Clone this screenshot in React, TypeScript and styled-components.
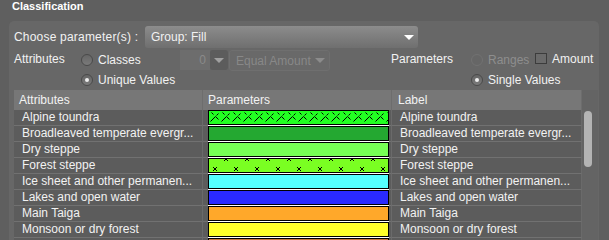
import styled, { createGlobalStyle } from "styled-components";

const GlobalStyle = createGlobalStyle`
  html, body {
    margin: 0;
    padding: 0;
    background: #5f5f5f;
  }
  body {
    font-family: "Liberation Sans", Arial, sans-serif;
    font-size: 12px;
    color: #f2f2f2;
  }
`;

type Pattern = "alpine" | "cross";

interface RowData {
  name: string;
  color: string;
  pattern?: Pattern;
}

// the last row only peeks in at the bottom edge, its text is below the fold
const rows: RowData[] = [
  { name: "Alpine toundra", color: "#22ff22", pattern: "alpine" },
  { name: "Broadleaved temperate evergr...", color: "#24a831" },
  { name: "Dry steppe", color: "#77ff55" },
  { name: "Forest steppe", color: "#7aff22", pattern: "cross" },
  { name: "Ice sheet and other permanen...", color: "#55ffff" },
  { name: "Lakes and open water", color: "#2a2aff" },
  { name: "Main Taiga", color: "#ffa82a" },
  { name: "Monsoon or dry forest", color: "#ffff2a" },
  { name: "", color: "#c8783c" },
];

const Window = styled.div`
  width: 609px;
  height: 240px;
  overflow: hidden;
  background: #5f5f5f;
`;

const Title = styled.div`
  height: 21px;
  padding-left: 12px;
  font-size: 11px;
  font-weight: bold;
  line-height: 13px;
  color: #ffffff;
`;

const Panel = styled.div`
  margin-left: 9px;
  width: 590px;
  height: 219px;
  box-sizing: border-box;
  padding: 5px 1px 0 5px;
  background: #676767;
  border-radius: 5px 5px 0 0;
  display: flex;
  flex-direction: column;
`;

const ChooseRow = styled.div`
  display: flex;
  align-items: center;
  height: 22px;
`;

const ChooseLabel = styled.span`
  width: 131px;
  letter-spacing: 0.2px;
`;

const Combo = styled.div`
  width: 273px;
  height: 22px;
  box-sizing: border-box;
  padding: 0 4px 0 6px;
  border-radius: 3px;
  background: linear-gradient(#8c8c8c, #6f6f6f);
  display: flex;
  align-items: center;
  justify-content: space-between;
`;

const Arrow = styled.span<{ $color: string }>`
  width: 0;
  height: 0;
  border-left: 5px solid transparent;
  border-right: 5px solid transparent;
  border-top: 5px solid ${(p) => p.$color};
`;

const OptionGrid = styled.div`
  margin-top: 2px;
  display: grid;
  grid-template-columns: 67px 99px 150px 61px 80px 64px auto;
  grid-template-rows: 20px 20px;
`;

const Cell = styled.div<{ $col: string }>`
  grid-column: ${(p) => p.$col};
  display: flex;
  align-items: center;
`;

const GroupLabel = styled.div<{ $col: string }>`
  grid-column: ${(p) => p.$col};
  line-height: 18px;
`;

const RadioLabel = styled.label<{ $disabled?: boolean }>`
  display: flex;
  align-items: center;
  gap: 5px;
  color: ${(p) => (p.$disabled ? "#8e8e8e" : "#f2f2f2")};
`;

const RadioDot = styled.span<{ $checked?: boolean; $disabled?: boolean }>`
  width: 12px;
  height: 12px;
  box-sizing: border-box;
  border-radius: 50%;
  border: 1px solid ${(p) => (p.$disabled ? "#727272" : "#4a4a4a")};
  background: ${(p) =>
    p.$disabled ? "#666666" : "linear-gradient(#666666, #7a7a7a)"};
  display: flex;
  align-items: center;
  justify-content: center;

  &::after {
    content: "";
    width: 4px;
    height: 4px;
    border-radius: 50%;
    background: #eeeeee;
    display: ${(p) => (p.$checked ? "block" : "none")};
  }
`;

const CheckLabel = styled.label`
  display: flex;
  align-items: flex-start;
  gap: 5px;
  align-self: flex-start;
  line-height: 18px;
`;

const CheckBox = styled.span`
  margin-top: 3px;
  width: 12px;
  height: 11px;
  box-sizing: border-box;
  border: 1px solid #3c3c3c;
  background: #6a6a6a;
`;

const Spinner = styled.div`
  display: flex;
  height: 20px;
  align-self: flex-start;
`;

const SpinBox = styled.div`
  width: 30px;
  box-sizing: border-box;
  padding-right: 4px;
  background: #6d6d6d;
  color: #8a8a8a;
  text-align: right;
  line-height: 20px;
`;

const SpinButton = styled.div`
  width: 18px;
  background: #5c5c5c;
  border-radius: 3px;
  display: flex;
  align-items: center;
  justify-content: center;
`;

const MethodCombo = styled.div`
  margin-left: 1px;
  width: 101px;
  height: 21px;
  box-sizing: border-box;
  padding: 0 4px 0 6px;
  border: 1px solid #6f6f6f;
  border-radius: 3px;
  background: #696969;
  color: #888888;
  display: flex;
  align-items: center;
  justify-content: space-between;
`;

const Table = styled.div`
  width: 584px;
  flex: 1;
  display: flex;
  overflow: hidden;
`;

const TableBody = styled.div`
  width: 568px;
`;

const Columns = "189px 189px 190px";

const HeaderRow = styled.div`
  display: grid;
  grid-template-columns: ${Columns};
  height: 20px;
  background: #777777;
`;

const HeaderCell = styled.div<{ $pad: number }>`
  padding-left: ${(p) => p.$pad}px;
  line-height: 20px;
  border-right: 1px solid #6d6d6d;
`;

const DataRow = styled.div`
  display: grid;
  grid-template-columns: ${Columns};
  height: 16px;
  background: #5c5c5c;
`;

const DataCell = styled.div`
  padding-left: 8px;
  line-height: 15px;
  white-space: nowrap;
  overflow: hidden;
  border-bottom: 1px solid #717171;
  border-right: 1px solid #6a6a6a;
`;

const SwatchCell = styled.div`
  padding: 0 2px 0 5px;
  border-bottom: 1px solid #717171;
  border-right: 1px solid #6a6a6a;
`;

const Swatch = styled.div<{ $color: string }>`
  height: 15px;
  box-sizing: border-box;
  border: 1px solid #000000;
  background: ${(p) => p.$color};
  box-shadow: 0 1px 0 #ffffff;
  overflow: hidden;

  svg {
    display: block;
  }
`;

const ScrollTrack = styled.div`
  width: 16px;
  box-sizing: border-box;
  padding: 21px 0 0 2px;
  background: #646464;
`;

const ScrollThumb = styled.div`
  width: 8px;
  height: 56px;
  border-radius: 4px;
  background: #b4b4b4;
`;

function PatternFill({ kind }: { kind: Pattern }) {
  if (kind === "alpine") {
    return (
      <svg width="179" height="13">
        <defs>
          <pattern id="alpine" width="11" height="13" patternUnits="userSpaceOnUse">
            <path
              d="M1.5 10.5 L6.5 5.5 L9.5 8.5 M7.5 4.5 L9.5 2.5 M2.5 1.5 L4.5 3.5"
              stroke="#000"
              strokeWidth="1"
              fill="none"
            />
          </pattern>
        </defs>
        <rect width="179" height="13" fill="url(#alpine)" />
      </svg>
    );
  }
  return (
    <svg width="179" height="13">
      <defs>
        <pattern id="cross" width="21" height="20" patternUnits="userSpaceOnUse">
          <path
            d="M4 8 L8 12 M8 8 L4 12 M15 -2 L19 2 M19 -2 L15 2 M15 18 L19 22 M19 18 L15 22"
            stroke="#000"
            strokeWidth="1"
            fill="none"
          />
        </pattern>
      </defs>
      <rect width="179" height="13" fill="url(#cross)" />
    </svg>
  );
}

export default function App() {
  return (
    <Window>
      <GlobalStyle />
      <Title>Classification</Title>
      <Panel>
        <ChooseRow>
          <ChooseLabel>Choose parameter(s) :</ChooseLabel>
          <Combo>
            <span>Group: Fill</span>
            <Arrow $color="#ffffff" />
          </Combo>
        </ChooseRow>

        <OptionGrid>
          <GroupLabel $col="1">Attributes</GroupLabel>
          <Cell $col="2">
            <RadioLabel>
              <RadioDot />
              Classes
            </RadioLabel>
          </Cell>
          <Cell $col="3">
            <Spinner>
              <SpinBox>0</SpinBox>
              <SpinButton>
                <Arrow $color="#a0a0a0" />
              </SpinButton>
              <MethodCombo>
                <span>Equal Amount</span>
                <Arrow $color="#8c8c8c" />
              </MethodCombo>
            </Spinner>
          </Cell>
          <GroupLabel $col="5">Parameters</GroupLabel>
          <Cell $col="6">
            <RadioLabel $disabled>
              <RadioDot $disabled />
              Ranges
            </RadioLabel>
          </Cell>
          <Cell $col="7">
            <CheckLabel>
              <CheckBox />
              Amount
            </CheckLabel>
          </Cell>

          <Cell $col="2 / span 2">
            <RadioLabel>
              <RadioDot $checked />
              Unique Values
            </RadioLabel>
          </Cell>
          <Cell $col="6 / span 2">
            <RadioLabel>
              <RadioDot $checked />
              Single Values
            </RadioLabel>
          </Cell>
        </OptionGrid>

        <Table>
          <TableBody>
            <HeaderRow>
              <HeaderCell $pad={5}>Attributes</HeaderCell>
              <HeaderCell $pad={5}>Parameters</HeaderCell>
              <HeaderCell $pad={6}>Label</HeaderCell>
            </HeaderRow>
            {rows.map((row, index) => (
              <DataRow key={index}>
                <DataCell>{row.name}</DataCell>
                <SwatchCell>
                  <Swatch $color={row.color}>
                    {row.pattern && <PatternFill kind={row.pattern} />}
                  </Swatch>
                </SwatchCell>
                <DataCell>{row.name}</DataCell>
              </DataRow>
            ))}
          </TableBody>
          <ScrollTrack>
            <ScrollThumb />
          </ScrollTrack>
        </Table>
      </Panel>
    </Window>
  );
}
